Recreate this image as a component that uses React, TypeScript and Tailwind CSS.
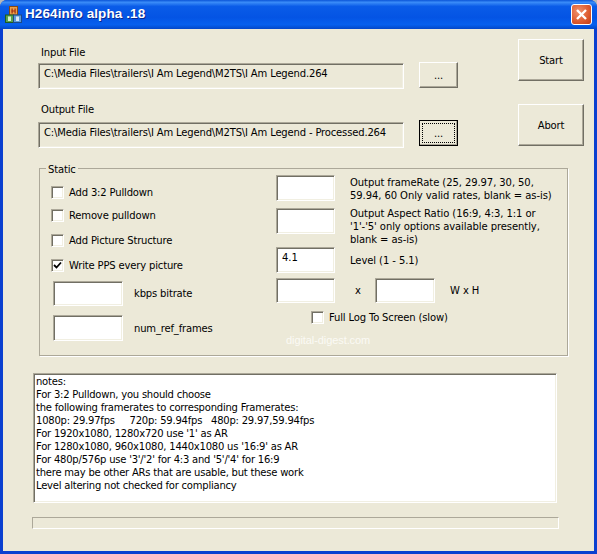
import type { ReactNode } from 'react';

const notes = [
  'notes:',
  'For 3:2 Pulldown, you should choose',
  'the following framerates to corresponding Framerates:',
  '1080p: 29.97fps\u00a0\u00a0\u00a0\u00a0\u00a0720p: 59.94fps\u00a0\u00a0\u00a0480p: 29.97,59.94fps',
  "For 1920x1080, 1280x720 use '1' as AR",
  "For 1280x1080, 960x1080, 1440x1080 us '16:9' as AR",
  "For 480p/576p use '3'/'2' for 4:3 and '5'/'4' for 16:9",
  'there may be other ARs that are usable, but these work',
  'Level altering not checked for compliancy',
];

function AppIcon() {
  return (
    <svg width="17" height="17" viewBox="0 0 17 17" className="shrink-0">
      <rect x="4.5" y="0.5" width="8" height="8.5" fill="#e9a04a" stroke="#8a4a12" />
      <rect x="6.5" y="2.5" width="1.2" height="5" fill="#a02c10" />
      <rect x="9.5" y="2.5" width="1.2" height="5" fill="#a02c10" />
      <rect x="6.5" y="4.5" width="3.5" height="1" fill="#a02c10" />
      <rect x="0.5" y="9" width="8" height="7.5" fill="#58a24e" stroke="#1f5a22" />
      <rect x="3" y="10.5" width="3" height="4.5" fill="#d8eed0" />
      <rect x="8.5" y="9" width="8" height="7.5" fill="#5d9bd8" stroke="#1c4a86" />
      <rect x="11" y="10.5" width="3" height="4.5" fill="#dbe9f8" />
    </svg>
  );
}

function CloseButton() {
  return (
    <div className="flex h-[21px] w-[21px] items-center justify-center rounded-[3px] border border-white bg-[radial-gradient(circle_at_35%_35%,#f0926e,#dd5a2e_60%,#c23c16)]">
      <svg width="13" height="13" viewBox="0 0 13 13">
        <path d="M2 2 L11 11 M11 2 L2 11" stroke="#fff" strokeWidth="2.4" />
      </svg>
    </div>
  );
}

function Field({ className, value, disabled }: { className: string; value?: string; disabled?: boolean }) {
  return (
    <div
      className={`${className} shrink-0 border border-t-[#aca899] border-l-[#aca899] border-r-white border-b-white pl-[5px] pt-[3px] leading-[14px] whitespace-nowrap overflow-hidden shadow-[inset_1px_1px_0_#716f64,inset_-1px_-1px_0_#f1efe2] ${
        disabled ? 'bg-[#ece9d8]' : 'bg-white'
      }`}
    >
      {value}
    </div>
  );
}

function Btn({ className, children }: { className: string; children: ReactNode }) {
  return (
    <div
      className={`${className} flex shrink-0 items-center justify-center border border-t-white border-l-white border-r-[#716f64] border-b-[#716f64] shadow-[inset_-1px_-1px_0_#aca899]`}
    >
      {children}
    </div>
  );
}

function Check({ label, checked, className }: { label: string; checked?: boolean; className?: string }) {
  return (
    <div className={`flex items-center gap-[5px] ${className ?? ''}`}>
      <div className="h-[13px] w-[13px] shrink-0 border border-t-[#aca899] border-l-[#aca899] border-r-white border-b-white bg-white shadow-[inset_1px_1px_0_#716f64,inset_-1px_-1px_0_#f1efe2]">
        {checked && (
          <svg width="11" height="11" viewBox="0 0 11 11">
            <path d="M2 5 L4.5 7.5 L9 2.5" fill="none" stroke="#000" strokeWidth="1.8" />
          </svg>
        )}
      </div>
      <span className="leading-[13px]">{label}</span>
    </div>
  );
}

export default function App() {
  return (
    <div className="h-[554px] w-[597px] overflow-hidden bg-[#b8b8b8] font-['DejaVu_Sans',sans-serif] text-[10px] tracking-[-0.16px] text-black">
      <div className="flex h-full flex-col overflow-hidden rounded-t-[7px] bg-[#0a3fd0]">
        {/* title bar */}
        <div className="flex h-[29px] shrink-0 items-center bg-[linear-gradient(to_bottom,#0a55d8_0%,#3a8cf8_8%,#0a5ce8_22%,#0454e4_60%,#0660ee_85%,#0347c8_100%)] pl-[5px] pr-[5px]">
          <AppIcon />
          <span className="ml-[3px] font-['Liberation_Sans',sans-serif] text-[13.5px] font-bold tracking-[0.1px] text-white [text-shadow:1px_1px_0_#0a2a90]">
            H264info alpha .18
          </span>
          <div className="ml-auto">
            <CloseButton />
          </div>
        </div>

        {/* client area */}
        <div className="ml-[3px] mr-[3px] mb-[3px] h-[522px] bg-[#ece9d8]">
          {/* files + start/abort */}
          <div className="flex pl-[35px] pr-[10px] pt-[10px]">
            <div className="w-[420px]">
              <div className="mt-[7px] h-[13px] pl-[3px] leading-[13px]">Input File</div>
              <div className="mt-[4px] flex items-start">
                <Field className="h-[26px] w-[366px]" value="C:\Media Files\trailers\I Am Legend\M2TS\I Am Legend.264" disabled />
                <Btn className="ml-[15px] -mt-[1px] h-[26px] w-[39px]">...</Btn>
              </div>
              <div className="mt-[14px] h-[13px] pl-[3px] leading-[13px]">Output File</div>
              <div className="mt-[6px] flex items-start">
                <Field className="h-[26px] w-[366px]" value="C:\Media Files\trailers\I Am Legend\M2TS\I Am Legend - Processed.264" disabled />
                <div className="ml-[15px] -mt-[2px] flex h-[26px] w-[39px] items-center justify-center border border-black p-[2px] shadow-[inset_-1px_-1px_0_#aca899]">
                  <div className="flex h-full w-full items-center justify-center border border-dotted border-black">...</div>
                </div>
              </div>
            </div>
            <div className="ml-[60px] flex flex-col gap-[23px]">
              <Btn className="h-[42px] w-[66px]">Start</Btn>
              <Btn className="h-[42px] w-[66px]">Abort</Btn>
            </div>
          </div>

          {/* Static group */}
          <div className="relative ml-[36px] mt-[20px] flex h-[188px] w-[529px] border border-[#aca899] shadow-[1px_1px_0_#fff]">
            <span className="absolute -top-[6px] left-[6px] bg-[#ece9d8] px-[2px] leading-[13px]">Static</span>
            <div className="w-[236px] pl-[11px] pt-[17px]">
              <Check label="Add 3:2 Pulldown" />
              <Check label="Remove pulldown" className="mt-[10px]" />
              <Check label="Add Picture Structure" className="mt-[12px]" />
              <Check label="Write PPS every picture" checked className="mt-[12px]" />
              <div className="mt-[9px] flex items-center">
                <Field className="ml-[2px] h-[25px] w-[70px]" />
                <span className="ml-[11px]">kbps bitrate</span>
              </div>
              <div className="mt-[9px] flex items-center">
                <Field className="ml-[2px] h-[26px] w-[70px]" />
                <span className="ml-[11px]">num_ref_frames</span>
              </div>
            </div>
            <div className="pt-[6px] tracking-[-0.08px]">
              <div className="flex items-start">
                <Field className="h-[26px] w-[59px]" />
                <div className="ml-[15px] mt-[1px] leading-[13px]">
                  Output frameRate (25, 29.97, 30, 50,
                  <br />
                  59.94, 60 Only valid rates, blank = as-is)
                </div>
              </div>
              <div className="mt-[6px] flex items-start">
                <Field className="h-[26px] w-[59px]" />
                <div className="ml-[15px] -mt-[1px] leading-[13px]">
                  Output Aspect Ratio (16:9, 4:3, 1:1 or
                  <br />
                  '1'-'5' only options available presently,
                  <br />
                  blank = as-is)
                </div>
              </div>
              <div className="mt-[1px] flex items-center">
                <Field className="h-[26px] w-[59px]" value="4.1" />
                <span className="ml-[15px]">Level (1 - 5.1)</span>
              </div>
              <div className="mt-[5px] flex items-center">
                <Field className="h-[25px] w-[59px]" />
                <span className="ml-[20px] w-[20px]">x</span>
                <Field className="h-[25px] w-[60px]" />
                <span className="ml-[15px]">W x H</span>
              </div>
              <Check label="Full Log To Screen (slow)" className="ml-[35px] mt-[8px] tracking-[-0.16px]" />
              <div className="ml-[10px] mt-[10px] font-['Liberation_Sans',sans-serif] text-[11px] leading-[13px] text-[#fbfaf5]">digital-digest.com</div>
            </div>
          </div>

          {/* notes */}
          <div className="ml-[30px] mt-[17px] h-[130px] w-[524px] overflow-hidden border border-t-[#aca899] border-l-[#aca899] border-r-white border-b-white bg-white pl-[2px] pt-[1px] leading-[13px] tracking-[-0.22px] shadow-[inset_1px_1px_0_#716f64,inset_-1px_-1px_0_#f1efe2]">
            {notes.map((line) => (
              <div key={line} className="h-[13px] whitespace-nowrap">
                {line}
              </div>
            ))}
          </div>

          {/* progress */}
          <div className="ml-[29px] mt-[14px] h-[12px] w-[527px] border border-t-[#aca899] border-l-[#aca899] border-r-white border-b-white" />
        </div>
      </div>
    </div>
  );
}
